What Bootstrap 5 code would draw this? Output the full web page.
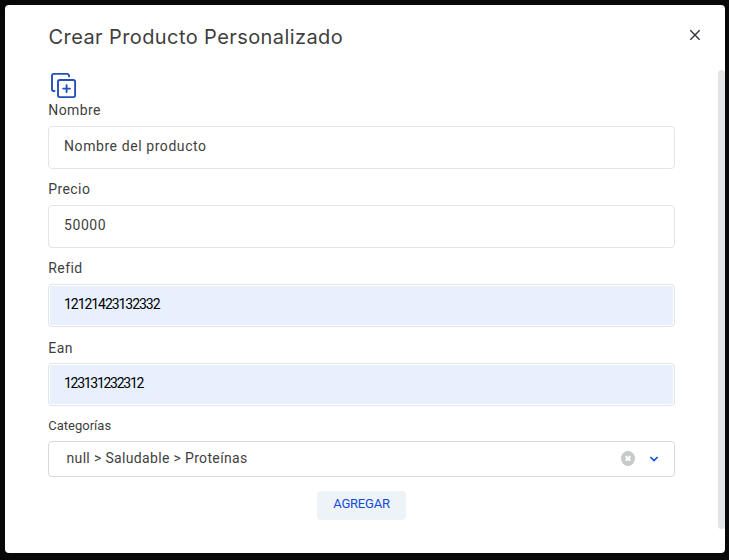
<!DOCTYPE html>
<html lang="es">
<head>
<meta charset="utf-8">
<meta name="viewport" content="width=device-width, initial-scale=1">
<title>Crear Producto Personalizado</title>
<link href="https://cdn.jsdelivr.net/npm/bootstrap@5.3.0/dist/css/bootstrap.min.css" rel="stylesheet">
<style>
body { background: #080808; font-family: Roboto, "Liberation Sans", sans-serif; font-size: 14px; color: #3f3f40; height: 560px; padding: 5px 4px 7px 5px; overflow: hidden; }
.dialog-panel { height: 548px; border-radius: 4px; }
.dialog-head { height: 65px; padding: 0 24px 0 43.5px; }
.dialog-title { font-family: Inter, Roboto, sans-serif; font-size: 20px; line-height: 24px; padding-top: 20px; letter-spacing: .41px; }
.close-btn { width: 12px; height: 12px; margin-top: 24px; }
.dialog-body { height: 459px; }
.form-area { padding-left: 43px; width: 670px; }
.icon-row { height: 30px; padding: 2px 0 0 1px; }
.field { height: 79px; }
.field-label { line-height: 21px; margin-bottom: 5px; padding-left: .3px; letter-spacing: .4px; }
.label-low { padding-top: 1px; margin-bottom: 4px; }
.form-control.field-input { height: 43px; border: 1px solid #e3e4e6; border-radius: 4px; padding: 0 15px 3px; font-size: 14px; color: #3f3f40; letter-spacing: .58px; }
.form-control.autofilled { background: #e8f0fe; color: #000; box-shadow: inset 0 0 0 1px #fff; letter-spacing: -1.05px; }
.category-label { font-size: 13px; line-height: 20px; margin-bottom: 5px; padding-left: .3px; }
.category-select { height: 36px; border: 1px solid #d8d9db; border-radius: 4px; padding: 0 15px 2px 17.5px; font-size: 14px; letter-spacing: .34px; }
.icon-gap { gap: 14px; padding-top: 1px; }
.add-btn.btn { width: 89px; height: 29px; margin-top: 14px; padding: 0 0 3px; background: #eef3f7; color: #134cd8; border: 0; border-radius: 4px; font-size: 13px; line-height: 20px; letter-spacing: -.2px; }
.scroll-thumb { width: 7px; height: 459px; border-radius: 4px; background: #e3e4e6; }
.form-control.code-short { letter-spacing: -1.28px; }
</style>
</head>
<body>
<main class="dialog-panel bg-white">
  <header class="dialog-head d-flex justify-content-between align-items-start">
    <h1 class="dialog-title fw-normal mb-0">Crear Producto Personalizado</h1>
    <button class="close-btn btn p-0 border-0 d-flex" aria-label="Cerrar">
      <svg width="12" height="12" viewBox="0 0 12 12" fill="none" stroke="#30343e" stroke-width="1.4"><path d="M1.3 1.3l9.4 9.4M10.7 1.3l-9.4 9.4"/></svg>
    </button>
  </header>
  <div class="dialog-body d-flex justify-content-between">
    <form class="form-area">
      <div class="icon-row">
        <svg class="d-block" width="30" height="28" viewBox="0 0 30 28" fill="none" stroke="#2450b8" stroke-width="1.9" stroke-linecap="round" stroke-linejoin="round">
          <path d="M20 4.4V3.7a1.8 1.8 0 0 0-1.8-1.8H4.8A1.8 1.8 0 0 0 3 3.7v13.5a1.8 1.8 0 0 0 1.8 1.8h.7"/>
          <rect x="9" y="8" width="17.1" height="17.1" rx="1.8"/>
          <path d="M17.6 13.2v6.8M14.2 16.6H21"/>
        </svg>
      </div>
      <div class="field">
        <label class="field-label d-block" for="nombre">Nombre</label>
        <input id="nombre" class="form-control field-input" value="Nombre del producto">
      </div>
      <div class="field">
        <label class="field-label d-block" for="precio">Precio</label>
        <input id="precio" class="form-control field-input" value="50000">
      </div>
      <div class="field">
        <label class="field-label d-block" for="refid">Refid</label>
        <input id="refid" class="form-control field-input autofilled" value="12121423132332">
      </div>
      <div class="field">
        <label class="field-label label-low d-block" for="ean">Ean</label>
        <input id="ean" class="form-control field-input autofilled code-short" value="123131232312">
      </div>
      <div class="category-label">Categorías</div>
      <div class="category-select d-flex align-items-center justify-content-between">
        <span>null &gt; Saludable &gt; Proteínas</span>
        <span class="icon-gap d-flex align-items-center">
          <svg width="14" height="15" viewBox="0 0 14 15"><ellipse cx="7" cy="7.5" rx="7" ry="7.4" fill="#c7c9ca"/><path d="M4.7 5.2l4.6 4.6M9.3 5.2L4.7 9.8" stroke="#fff" stroke-width="2"/></svg>
          <svg width="10" height="8" viewBox="0 0 10 8" fill="none" stroke="#134cd8" stroke-width="1.6"><path d="M1.4 2L5 5.6 8.6 2"/></svg>
        </span>
      </div>
      <div class="d-flex justify-content-center"><button type="button" class="add-btn btn">AGREGAR</button></div>
    </form>
    <div class="scroll-thumb"></div>
  </div>
</main>
<script src="https://cdn.jsdelivr.net/npm/bootstrap@5.3.0/dist/js/bootstrap.bundle.min.js"></script>
</body>
</html>
